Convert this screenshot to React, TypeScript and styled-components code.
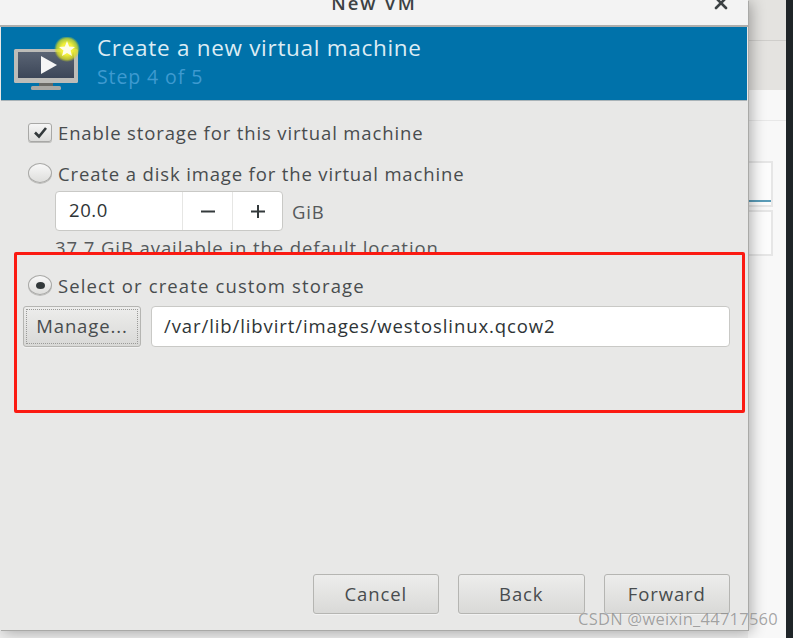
import React from "react";
import styled, { createGlobalStyle } from "styled-components";

const Global = createGlobalStyle`
  html, body { margin: 0; padding: 0; background: #f4f4f4; }
  body { width: 793px; height: 638px; overflow: hidden; font-family: "Open Sans", "Noto Sans", sans-serif; }
`;

const Screen = styled.div`
  position: relative;
  display: flex;
  width: 793px;
  height: 638px;
  overflow: hidden;
  background: #eeeeee;
`;

const Dialog = styled.div`
  position: relative;
  z-index: 1;
  display: flex;
  flex-direction: column;
  flex: none;
  width: 748px;
  height: 630px;
  background: #e8e8e7;
  box-shadow: 1px 1px 0 #a9a9a7, 3px 2px 14px rgba(0, 0, 0, 0.32);
`;

const TitleBar = styled.div`
  position: relative;
  flex: none;
  height: 25px;
  background: #f3f3f3;
  border-bottom: 2px solid #aeaeac;
  text-align: center;
  overflow: hidden;
`;

const Title = styled.div`
  margin-top: -9px;
  font-size: 18.5px;
  line-height: 24px;
  font-weight: 600;
  color: #3c4143;
  letter-spacing: 2px;
`;

const CloseIcon = styled.svg`
  position: absolute;
  right: 20px;
  top: -4px;
  width: 14px;
  height: 14px;
`;

const Banner = styled.div`
  flex: none;
  display: flex;
  align-items: center;
  height: 73px;
  margin: 0 1px;
  padding-left: 12px;
  background: #0072aa;
  box-shadow: 0 1px 0 #a9b3b8;
  gap: 16px;
`;

const BannerText = styled.div`
  display: flex;
  flex-direction: column;
  margin-top: -4px;
`;

const Heading = styled.div`
  font-size: 22.5px;
  line-height: 28px;
  color: #dcecf4;
  letter-spacing: 0.7px;
`;

const Step = styled.div`
  font-size: 19.5px;
  line-height: 25px;
  margin-top: 2px;
  color: #3e9ad0;
  letter-spacing: 0.9px;
`;

const Body = styled.div`
  flex: 1;
  display: flex;
  flex-direction: column;
  padding: 20px 0 0 28px;
  min-height: 0;
`;

const OptionRow = styled.div<{ $top?: number; $track?: number }>`
  display: flex;
  align-items: center;
  gap: 6px;
  height: 24px;
  margin-top: ${(p) => p.$top ?? 0}px;
  font-size: 18.5px;
  letter-spacing: ${(p) => p.$track ?? 0.86}px;
  color: #484c4e;
`;

const CheckBox = styled.span`
  display: flex;
  align-items: center;
  justify-content: center;
  flex: none;
  width: 24px;
  height: 19px;
  border: 1px solid #a8a8a6;
  border-radius: 3px;
  box-sizing: border-box;
  background: linear-gradient(#f6f6f6, #dcdcda);
  box-shadow: 0 1px 0 #bdbdbb;
`;

const Radio = styled.span<{ $on?: boolean }>`
  display: flex;
  align-items: center;
  justify-content: center;
  flex: none;
  width: 24px;
  height: 20px;
  border: 1px solid #a8a8a6;
  border-radius: 50%;
  box-sizing: border-box;
  background: linear-gradient(#f8f8f8, #dededc);
  box-shadow: 0 1px 0 #bdbdbb;
  &::after {
    content: "";
    display: ${(p) => (p.$on ? "block" : "none")};
    width: 9px;
    height: 7px;
    border-radius: 50%;
    background: #33393b;
  }
`;

const SpinRow = styled.div`
  display: flex;
  align-items: center;
  margin: 6px 0 0 27px;
  height: 40px;
`;

const Spin = styled.div`
  display: flex;
  width: 228px;
  height: 40px;
  box-sizing: border-box;
  background: #ffffff;
  border: 1px solid #c9c9c6;
  border-radius: 4px;
`;

const SpinValue = styled.div`
  flex: 1;
  padding-left: 13px;
  font-size: 18.5px;
  line-height: 36px;
  color: #2e3436;
  letter-spacing: 0.6px;
`;

const SpinButton = styled.div`
  display: flex;
  align-items: center;
  justify-content: center;
  width: 49px;
  border-left: 1px solid #e6e6e4;
`;

const Unit = styled.div`
  margin-left: 9px;
  font-size: 18.5px;
  letter-spacing: 0.8px;
  color: #55595b;
`;

const Hint = styled.div`
  margin: 5px 0 0 27px;
  height: 16px;
  overflow: hidden;
  font-size: 18.5px;
  line-height: 24px;
  letter-spacing: 0.92px;
  color: #55595b;
`;

const Marked = styled.div`
  display: flex;
  flex-direction: column;
  width: 731px;
  height: 161px;
  box-sizing: border-box;
  margin-left: -14px;
  padding: 18px 0 0 6px;
  border: 3px solid #fb1a12;
  border-radius: 2px;
`;

const MarkedOption = styled.div`
  padding-left: 5px;
`;

const PathRow = styled.div`
  display: flex;
  gap: 10px;
  margin-top: 9px;
`;

const Push = styled.div<{ $focus?: boolean }>`
  position: relative;
  display: flex;
  align-items: center;
  justify-content: center;
  flex: none;
  box-sizing: border-box;
  width: 118px;
  height: 41px;
  padding-bottom: 2px;
  border: 1px solid #b5b5b2;
  border-radius: 3px;
  background: linear-gradient(#ededec, #d9d9d7);
  box-shadow: 0 1px 0 #f2f2f2;
  font-size: 18.5px;
  letter-spacing: 0.9px;
  color: #484c4e;
  &::after {
    content: "";
    display: ${(p) => (p.$focus ? "block" : "none")};
    position: absolute;
    inset: 2px;
    border: 1px dotted #9a9a98;
  }
`;

const PathField = styled.div`
  flex: none;
  box-sizing: border-box;
  width: 579px;
  height: 41px;
  padding-left: 12px;
  border: 1px solid #c9c9c6;
  border-radius: 4px;
  background: #ffffff;
  font-size: 18.5px;
  line-height: 38px;
  letter-spacing: 0.9px;
  color: #2e3436;
`;

const Actions = styled.div`
  flex: none;
  display: flex;
  justify-content: flex-end;
  gap: 19px;
  padding: 0 18px 16px 0;
`;

const ActionButton = styled(Push)`
  width: 126.5px;
  height: 40px;
`;

const Backdrop = styled.div`
  flex: 1;
  display: flex;
  flex-direction: column;
  height: 638px;
  background: #f8f8f8;
`;

const BackdropToolbar = styled.div`
  flex: none;
  height: 90px;
  background: #e4e3e0;
  border-top: 6px solid #e4e3e0;
  box-sizing: border-box;
`;

const ToolbarLine = styled.div`
  margin-top: 34px;
  height: 1px;
  background: #cfcecb;
`;

const BackdropStrip = styled.div`
  flex: none;
  height: 30px;
  border-bottom: 1px solid #e8e8e8;
`;

const BackdropCard = styled.div<{ $h: number; $top: number; $accent?: boolean }>`
  box-sizing: border-box;
  height: ${(p) => p.$h}px;
  margin: ${(p) => p.$top}px 13px 0 0;
  border: 2px solid #e6e6e6;
  border-left: none;
  background: #fcfcfc;
  box-shadow: ${(p) => (p.$accent ? "inset 0 -3px 0 #fcfcfc, inset 0 -5px 0 #5a9cb8" : "none")};
`;

const DarkEdge = styled.div`
  flex: none;
  width: 7px;
  height: 638px;
  background: #1f2528;
`;

const Watermark = styled.div`
  position: absolute;
  z-index: 2;
  right: 15px;
  bottom: 9px;
  font-size: 16.5px;
  line-height: 20px;
  color: rgba(90, 90, 90, 0.55);
  letter-spacing: 0.25px;
  text-shadow: 0 0 1px rgba(255, 255, 255, 0.6);
`;

const MonitorIcon = () => (
  <svg width="68" height="54" viewBox="0 0 68 54" style={{ flex: "none" }}>
    <defs>
      <linearGradient id="screen" x1="0" y1="0" x2="0" y2="1">
        <stop offset="0" stopColor="#5a6474" />
        <stop offset="1" stopColor="#3c4658" />
      </linearGradient>
      <radialGradient id="glow">
        <stop offset="0.45" stopColor="#f2f03a" />
        <stop offset="0.8" stopColor="#dde022" stopOpacity="0.75" />
        <stop offset="1" stopColor="#c8d820" stopOpacity="0" />
      </radialGradient>
    </defs>
    <rect x="1" y="12" width="64" height="34" rx="1.5" fill="#bdbcb8" />
    <rect x="5" y="15" width="56" height="26" fill="url(#screen)" />
    <rect x="26" y="46" width="14" height="3" fill="#6b6a66" />
    <rect x="18" y="49" width="30" height="4" rx="1.5" fill="#a9a8a4" />
    <polygon points="28,19 28,37 44,28" fill="#f6f6f6" />
    <circle cx="54" cy="12" r="13" fill="url(#glow)" />
    <polygon
      points="54,4 56.2,9.5 62,10 57.6,13.6 59,19 54,16 49,19 50.4,13.6 46,10 51.8,9.5"
      fill="#fffde8"
    />
  </svg>
);

export default function App() {
  return (
    <Screen>
      <Global />
      <Dialog>
        <TitleBar>
          <Title>New VM</Title>
          <CloseIcon viewBox="0 0 14 14">
            <path d="M2 2 L12 12 M12 2 L2 12" stroke="#3c4143" strokeWidth="2.6" strokeLinecap="round" />
          </CloseIcon>
        </TitleBar>
        <Banner>
          <MonitorIcon />
          <BannerText>
            <Heading>Create a new virtual machine</Heading>
            <Step>Step 4 of 5</Step>
          </BannerText>
        </Banner>
        <Body>
          <OptionRow>
            <CheckBox>
              <svg width="15" height="13" viewBox="0 0 15 13">
                <path d="M2 6.5 L6 10.5 L13 2" fill="none" stroke="#33393b" strokeWidth="2.6" />
              </svg>
            </CheckBox>
            Enable storage for this virtual machine
          </OptionRow>
          <OptionRow $top={17}>
            <Radio />
            Create a disk image for the virtual machine
          </OptionRow>
          <SpinRow>
            <Spin>
              <SpinValue>20.0</SpinValue>
              <SpinButton>
                <svg width="16" height="16" viewBox="0 0 16 16">
                  <path d="M1 8.5 H15" stroke="#33393b" strokeWidth="2" />
                </svg>
              </SpinButton>
              <SpinButton>
                <svg width="16" height="16" viewBox="0 0 16 16">
                  <path d="M1 8.5 H15 M8 2 V15" stroke="#33393b" strokeWidth="2" />
                </svg>
              </SpinButton>
            </Spin>
            <Unit>GiB</Unit>
          </SpinRow>
          <Hint>37.7 GiB available in the default location</Hint>
          <Marked>
            <MarkedOption>
              <OptionRow $track={1.13}>
                <Radio $on />
                Select or create custom storage
              </OptionRow>
            </MarkedOption>
            <PathRow>
              <Push $focus>Manage...</Push>
              <PathField>/var/lib/libvirt/images/westoslinux.qcow2</PathField>
            </PathRow>
          </Marked>
        </Body>
        <Actions>
          <ActionButton>Cancel</ActionButton>
          <ActionButton>Back</ActionButton>
          <ActionButton>Forward</ActionButton>
        </Actions>
      </Dialog>
      <Backdrop>
        <BackdropToolbar>
          <ToolbarLine />
        </BackdropToolbar>
        <BackdropStrip />
        <BackdropCard $h={46} $top={40} $accent />
        <BackdropCard $h={46} $top={3} />
      </Backdrop>
      <DarkEdge />
      <Watermark>CSDN @weixin_44717560</Watermark>
    </Screen>
  );
}
